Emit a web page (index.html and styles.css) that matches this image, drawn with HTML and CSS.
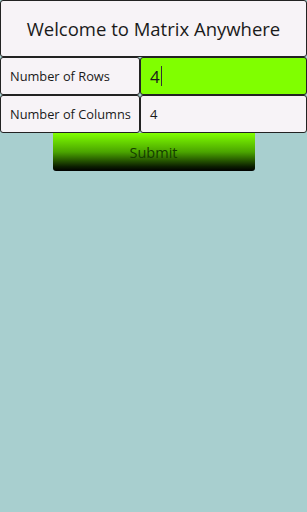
FILE: index.html
```html
<html>

<head>
    <meta charset="UTF-8">
    <meta name="viewport" content="width=device-width, initial-scale=1.0">
    <title>Matrix Anywhere</title>

    <link rel="stylesheet" href="styles.css">
</head>

<body>
    <div class="header">
        <h1>Welcome to Matrix Anywhere</h1>
    </div>

    <div class="row">
        <div class="label">Number of Rows</div>
        <div class="field active"><span class="value">4</span><span class="cursor"></span></div>
    </div>
    <div class="row">
        <div class="label">Number of Columns</div>
        <div class="field"><span class="value small">4</span></div>
    </div>

    <div class="actions">
        <button id="submit" type="button">Submit</button>
    </div>
</body>

</html>
```

FILE: styles.css
```css
* {
    box-sizing: border-box;
}

body {
    margin: 0;
    background-color: #a8cfcf;
    font-family: "Open Sans", "DejaVu Sans", sans-serif;
    color: #1a1a1a;
}

.header {
    height: 57px;
    border: 1px solid #222;
    border-radius: 3px;
    background-color: #f7f3f7;
    display: flex;
    align-items: center;
    justify-content: center;
}

.header h1 {
    margin: 0;
    font-size: 18.5px;
    font-weight: 400;
}

.row {
    display: flex;
    height: 38px;
}

.label {
    width: 140px;
    border: 1px solid #222;
    border-radius: 3px;
    background-color: #f7f3f7;
    font-size: 12.8px;
    display: flex;
    align-items: center;
    padding-left: 9px;
}

.field {
    flex: 1;
    border: 1px solid #222;
    border-radius: 3px;
    background-color: #f7f3f7;
    display: flex;
    align-items: center;
    padding-left: 9px;
}

.field.active {
    background-color: #80ff00;
}

.value {
    font-size: 17px;
}

.value.small {
    font-size: 13px;
}

.cursor {
    width: 1px;
    height: 20px;
    background-color: #333;
    margin-left: 1px;
}

.actions {
    display: flex;
    justify-content: center;
}

#submit {
    width: 202px;
    height: 38px;
    border: none;
    border-radius: 0 0 3px 3px;
    background: linear-gradient(to bottom, #80ff00 0%, #4aa400 50%, #0c2000 88%, #000 100%);
    color: #153d00;
    font-family: "Open Sans", "DejaVu Sans", sans-serif;
    font-size: 14.5px;
}
```
